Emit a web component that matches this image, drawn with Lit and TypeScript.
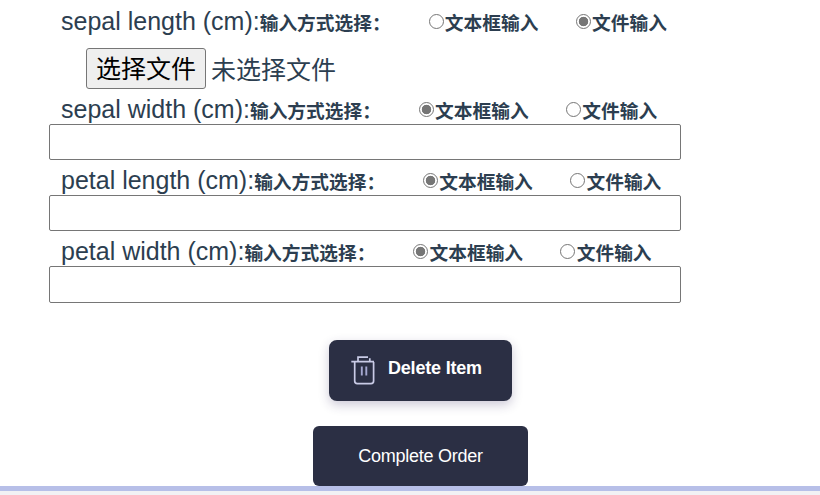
import { LitElement, html, css } from "lit";
import { customElement, property } from "lit/decorators.js";

type Mode = "text" | "file";

@customElement("feature-field")
class FeatureField extends LitElement {
  @property() name = "";
  @property() mode: Mode = "text";

  static styles = css`
    :host { display: block; }
    .label { display: flex; height: 35px; padding-left: 12px; line-height: 35px; white-space: nowrap; }
    .name { font-size: 25px; padding-top: 3px; }
    .choices { display: flex; font-size: 18.72px; font-weight: 700; padding-top: 5px; }
    .option { display: flex; margin-left: 37.9px; }
    .option + .option { margin-left: 37.4px; }
    .radio { appearance: none; box-sizing: border-box; width: 15px; height: 15px; margin: 8px 1.3px 0 0; border: 1px solid #767676; border-radius: 50%; background: #fff; }
    .radio:checked { background: radial-gradient(circle, #767676 4.4px, #fff 5.1px); }
    .text { display: block; box-sizing: border-box; width: 632px; height: 36px; margin: 0; border: 1px solid #767676; border-radius: 2px; background: #fff; outline: none; }
    :host(.last) .text { height: 37px; }
    .file { display: flex; height: 41px; padding: 12px 0 0 37px; font-size: 25px; line-height: 41px; }
    .status { height: 41px; margin-top: 2px; }
    .pick { box-sizing: border-box; width: 120px; height: 41px; padding: 2px 0 0; border: 1px solid #767676; border-radius: 3px; background: #efefef; color: #000; font: inherit; line-height: 37px; margin-right: 5px; }
  `;

  private option(mode: Mode, text: string) {
    return html`<label class="option"><input class="radio" type="radio" name="mode" .checked=${this.mode === mode} @change=${() => (this.mode = mode)}>${text}</label>`;
  }

  render() {
    return html`
      <div class="label">
        <span class="name">${this.name}:</span>
        <div class="choices">
          <span>输入方式选择：</span>
          ${this.option("text", "文本框输入")}${this.option("file", "文件输入")}
        </div>
      </div>
      ${this.mode === "text"
        ? html`<input class="text" type="text">`
        : html`<div class="file"><button class="pick">选择文件</button><span class="status">未选择文件</span></div>`}
    `;
  }
}

@customElement("app-root")
class AppRoot extends LitElement {
  static styles = css`
    :host { display: flex; flex-direction: column; box-sizing: border-box; height: 495px; overflow: hidden; background: #fff; color: #2c3e50; font-family: "Liberation Sans", "Noto Sans CJK SC", sans-serif; }
    .form { padding: 1px 0 0 49px; height: 302px; }
    .actions { display: flex; flex-direction: column; align-items: center; height: 146px; padding: 37px 0 0 21px; }
    .btn { display: flex; align-items: center; box-sizing: border-box; border: 0; padding: 0; background: #2b2f44; color: #fff; font-family: inherit; font-size: 18px; white-space: nowrap; }
    .delete { width: 183px; height: 61px; border-radius: 8px; padding: 0 0 4px 22px; font-weight: 700; letter-spacing: -0.2px; box-shadow: 0 4px 11px rgba(45, 35, 90, 0.24); }
    .trash { width: 26px; height: 30px; margin: 3px 11px 0 0; }
    .complete { width: 215px; height: 60px; margin-top: 25px; border-radius: 6px; justify-content: center; letter-spacing: -0.25px; }
    .footer { flex: 1; border-top: 5px solid #b7bfe8; background: #f1f1f4; }
  `;

  render() {
    return html`
      <div class="form">
        <feature-field name="sepal length (cm)" mode="file"></feature-field>
        <feature-field name="sepal width (cm)"></feature-field>
        <feature-field name="petal length (cm)"></feature-field>
        <feature-field class="last" name="petal width (cm)"></feature-field>
      </div>
      <div class="actions">
        <button class="btn delete">
          <svg class="trash" viewBox="0 0 26 30" fill="none" stroke="#c9cbe6" stroke-width="1.7">
            <path d="M0.3 6.6H23M7 6.5V2.2H17M18.8 3.2V6.5" />
            <path d="M3.7 7V26Q3.7 28.6 6.3 28.6H20Q22.6 28.6 22.6 26V7" />
            <path d="M10.8 11.5V20.5M15.3 11.5V20.5" stroke="#a5a8d0" stroke-width="1.9" />
          </svg>
          <span>Delete Item</span>
        </button>
        <button class="btn complete">Complete Order</button>
      </div>
      <div class="footer"></div>
    `;
  }
}
